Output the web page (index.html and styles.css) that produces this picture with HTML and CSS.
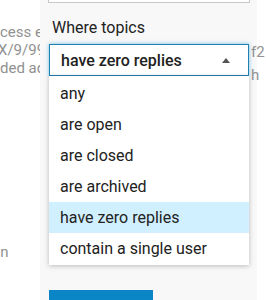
FILE: index.html
```html
<!DOCTYPE html>
<html lang="en">
<head>
    <meta charset="UTF-8">
    <meta name="viewport" content="width=device-width, initial-scale=1.0">
    <title>Topic filter</title>
    <link rel="stylesheet" href="styles.css">
</head>
<body>

    <!-- Page text behind the panel -->
    <div class="page-left">
        <div class="line">cess ex</div>
        <div class="line shift">X/9/99</div>
        <div class="line">ded ad</div>
        <div class="line line-low">nn</div>
    </div>

    <!-- Filter panel -->
    <div class="panel">
        <div class="field-top"></div>
        <label class="field-label">Where topics</label>
        <div class="select-wrap">
            <div class="select">
                <span class="select-value">have zero replies</span>
                <span class="caret"></span>
            </div>
            <ul class="options">
                <li>any</li>
                <li>are open</li>
                <li>are closed</li>
                <li>are archived</li>
                <li class="active">have zero replies</li>
                <li>contain a single user</li>
            </ul>
        </div>
        <button class="btn-primary" aria-label="Search"></button>
    </div>

    <div class="page-right">
        <div class="line">f2</div>
        <div class="line">h</div>
    </div>

</body>
</html>
```

FILE: styles.css
```css
body {
    font-family: Roboto, "Noto Sans", sans-serif;
    background: #fff;
    margin: 0;
    padding: 0;
    height: 300px;
    overflow: hidden;
    display: grid;
    grid-template-columns: 40px 217px 9px;
}

/* Seiten-Text links und rechts */
.page-left,
.page-right {
    color: #919191;
    font-size: 15px;
    line-height: 18px;
    white-space: nowrap;
    overflow: hidden;
}
.page-left {
    padding-top: 23px;
}
.page-left .shift {
    margin-left: -2px;
}
.page-left .line-low {
    margin-top: 166px;
    margin-left: -8px;
}
.page-right {
    overflow: visible;
    padding-top: 41px;
    line-height: 23px;
}
.page-right .line {
    margin-left: -6px;
}

/* Panel */
.panel {
    background: #f8f8f8;
    padding: 0 8px 0 9px;
    display: flex;
    flex-direction: column;
    align-items: flex-start;
}
.field-top {
    width: 200px;
    height: 2px;
    margin-left: -1px;
    background: #fff;
    border: 1px solid #c8c8c8;
    border-top: none;
}
.field-label {
    font-size: 16px;
    line-height: 19px;
    color: #222;
    margin: 15px 0 7px 3px;
}

.select-wrap {
    position: relative;
    width: 200px;
}
.select {
    box-sizing: border-box;
    height: 32px;
    background: #fff;
    border: 1px solid #1f80b2;
    box-shadow: 0 0 4px rgba(0, 136, 204, 0.55);
    display: flex;
    align-items: center;
    justify-content: space-between;
    padding: 0 18px 0 11px;
}
.select-value {
    font-size: 16px;
    font-weight: 500;
    color: #222;
}
.caret {
    width: 0;
    height: 0;
    border-left: 4.5px solid transparent;
    border-right: 4.5px solid transparent;
    border-bottom: 5px solid #555;
}

.options {
    position: absolute;
    top: 32px;
    left: 0;
    width: 200px;
    margin: 0;
    padding: 2px 0 1px;
    list-style: none;
    background: #fff;
    box-shadow: 0 1px 5px rgba(0, 0, 0, 0.25);
    z-index: 5;
}
.options li {
    height: 31px;
    line-height: 31px;
    padding-left: 11px;
    font-size: 16px;
    color: #222;
    white-space: nowrap;
}
.options li.active {
    background: #d1f0ff;
}

.btn-primary {
    margin-top: 214px;
    width: 104px;
    height: 10px;
    background: #0a85c6;
    border: none;
    padding: 0;
    cursor: pointer;
}
```
